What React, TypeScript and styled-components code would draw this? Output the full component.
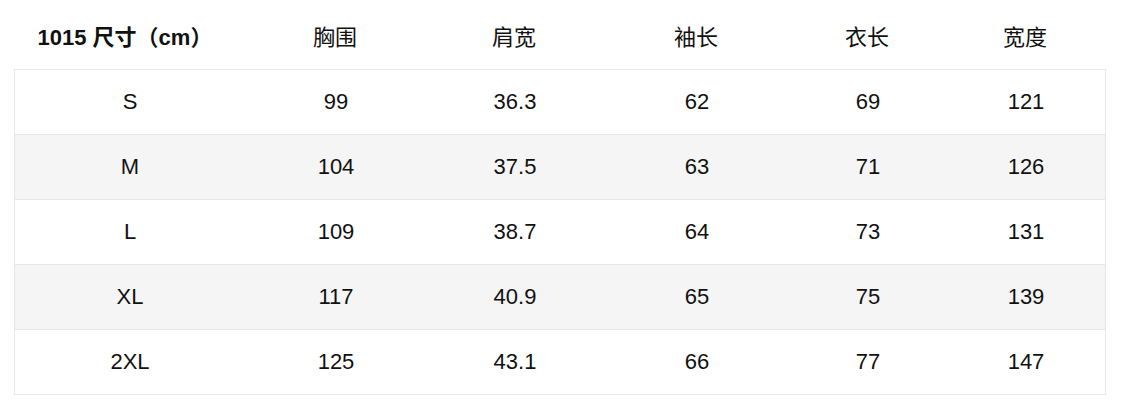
import React from "react";
import styled, { createGlobalStyle } from "styled-components";

const GlobalStyle = createGlobalStyle`
  html, body {
    margin: 0;
    padding: 0;
    background: #ffffff;
  }
  body {
    font-family: "Liberation Sans", "Noto Sans CJK SC", sans-serif;
    color: #111111;
  }
`

const COLUMNS = "230px 182px 176px 188px 154px 162px";

const Page = styled.div`
  width: 1124px;
  height: 412px;
  padding: 0 0 0 14px;
  box-sizing: border-box;
`

const HeaderRow = styled.div`
  display: grid;
  grid-template-columns: ${COLUMNS};
  height: 69px;
  align-items: center;
`

const HeadCell = styled.div<{ $bold?: boolean }>`
  text-align: center;
  font-size: 22px;
  font-weight: ${p => (p.$bold ? 700 : 400)};
  padding-right: ${p => (p.$bold ? "8px" : "0")};
  white-space: nowrap;
`

const Table = styled.div`
  width: 1092px;
  border: 1px solid #e6e6e6;
  box-sizing: border-box;
`

const Row = styled.div<{ $striped: boolean }>`
  display: grid;
  grid-template-columns: ${COLUMNS};
  height: 64px;
  align-items: center;
  background: ${p => (p.$striped ? "#f5f5f5" : "#ffffff")};
  & + & {
    border-top: 1px solid #e6e6e6;
  }
`

const Cell = styled.div`
  text-align: center;
  font-size: 22px;
  color: #111111;
`

const headers = ["胸围", "肩宽", "袖长", "衣长", "宽度"];

const sizes: string[][] = [
  ["S", "99", "36.3", "62", "69", "121"],
  ["M", "104", "37.5", "63", "71", "126"],
  ["L", "109", "38.7", "64", "73", "131"],
  ["XL", "117", "40.9", "65", "75", "139"],
  ["2XL", "125", "43.1", "66", "77", "147"],
];

export default function App() {
  return (
    <>
      <GlobalStyle />
      <Page>
        <HeaderRow>
          <HeadCell $bold>1015 尺寸（cm）</HeadCell>
          {headers.map(h => (
            <HeadCell key={h}>{h}</HeadCell>
          ))}
        </HeaderRow>
        <Table>
          {sizes.map((row, i) => (
            <Row key={row[0]} $striped={i % 2 === 1}>
              {row.map((v, j) => (
                <Cell key={j}>{v}</Cell>
              ))}
            </Row>
          ))}
        </Table>
      </Page>
    </>
  );
}
